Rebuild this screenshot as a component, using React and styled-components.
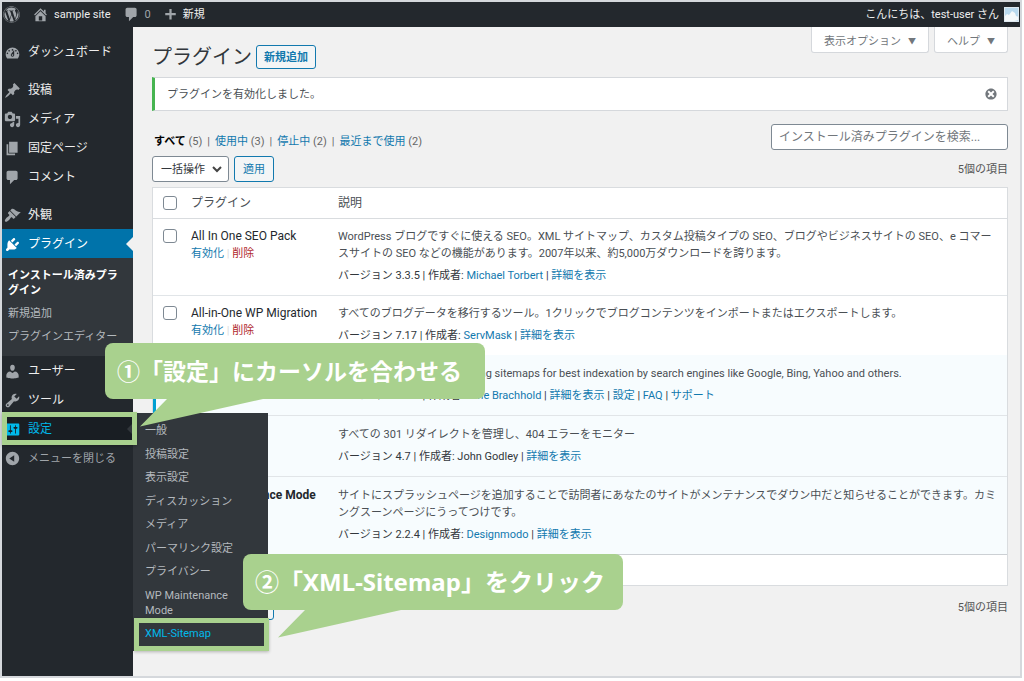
import React from "react";
import styled, { createGlobalStyle } from "styled-components";
import { FaWordpress } from "react-icons/fa";

const GlobalStyle = createGlobalStyle`
  * {
    box-sizing: border-box;
  }
  body {
    margin: 0;
    background: #fff;
    color: #4a4f54;
    font-family: Roboto, "Noto Sans CJK JP", sans-serif;
    font-size: 11px;
    line-height: 17px;
  }
  h1, p, ul {
    margin: 0;
    padding: 0;
  }
  ul {
    list-style: none;
  }
  a {
    color: #1279ae;
    text-decoration: none;
  }
  button, input, select {
    font-family: inherit;
  }
`;

const ICONS = {
  home: "M16 8.5l1.53 1.53-1.06 1.06L10 4.6l-6.47 6.49-1.06-1.06L10 2.5l4 4v-2h2v4zm-6-2.46l6 5.99V18H4v-5.97zM12 17v-5H8v5h4z",
  plus: "M17 8v3h-5.5v5.5h-3V11H3V8h5.500V2.500h3V8z",
  dashboard:
    "M3.76 17h12.48c1.1-1.37 1.76-3.11 1.76-5 0-4.42-3.58-8-8-8s-8 3.58-8 8c0 1.89.66 3.63 1.76 5zM10 6c.55 0 1 .45 1 1s-.45 1-1 1-1-.45-1-1 .45-1 1-1zM6 7c.55 0 1 .45 1 1s-.45 1-1 1-1-.45-1-1 .45-1 1-1zm8 0c.55 0 1 .45 1 1s-.45 1-1 1-1-.45-1-1 .45-1 1-1zm-5.37 4.55L12 7v6c0 1.100-.9 2-2 2s-2-.9-2-2c0-.57.24-1.080.63-1.450zM4 10c.55 0 1 .45 1 1s-.45 1-1 1-1-.45-1-1 .45-1 1-1zm12 0c.55 0 1 .45 1 1s-.45 1-1 1-1-.45-1-1 .45-1 1-1zm-5 3c0-.55-.45-1-1-1s-1 .45-1 1 .45 1 1 1 1-.45 1-1z",
  post: "M10.44 3.02l1.82-1.82 6.36 6.35-1.83 1.82c-1.05-.68-2.48-.57-3.41.36l-.75.75c-.92.93-1.04 2.35-.35 3.41l-1.83 1.82-2.41-2.41-2.8 2.79c-.42.42-3.38 2.71-3.8 2.29s1.86-3.39 2.28-3.81l2.79-2.79L4.1 9.36l1.83-1.82c1.05.69 2.48.57 3.4-.36l.75-.75c.93-.92 1.05-2.35.36-3.41z",
  media:
    "M13 11V4c0-.55-.45-1-1-1h-1.67L9 1H5L3.67 3H2c-.55 0-1 .45-1 1v7c0 .55.45 1 1 1h10c.55 0 1-.45 1-1zM7 4.5c1.38 0 2.5 1.12 2.5 2.5S8.38 9.5 7 9.5 4.5 8.38 4.5 7 5.62 4.5 7 4.5zM14 6h5v10.5c0 1.38-1.12 2.5-2.5 2.5S14 17.88 14 16.5s1.12-2.5 2.5-2.5c.17 0 .34.02.5.05V9h-3V6zm-4 8.05V13h2v3.5c0 1.38-1.12 2.5-2.5 2.5S7 17.88 7 16.5 8.12 14 9.5 14c.17 0 .34.02.5.05z",
  page: "M6 15V2h10v13H6zm-1 1h8v2H3V5h2v11z",
  comments:
    "M5 2h9q.82 0 1.41.59T16 4v7q0 .82-.59 1.41T14 13h-2l-5 5v-5H5q-.82 0-1.41-.59T3 11V4q0-.82.59-1.41T5 2z",
  appearance:
    "M14.48 11.06L7.41 3.99l1.5-1.5c.5-.56 2.3-.47 3.51.32 1.21.8 1.43 1.28 2.91 2.1 1.18.64 2.45 1.26 4.45.85zm-.71.71L6.7 4.7 4.93 6.47c-.39.39-.39 1.02 0 1.41l1.06 1.06c.39.39.39 1.03 0 1.42-.6.6-1.43 1.11-2.21 1.69-.35.26-.7.53-1.01.84C1.43 14.23.4 16.08 1.4 17.07c.99 1 2.84-.03 4.18-1.36.31-.31.58-.66.85-1.02.57-.78 1.08-1.61 1.69-2.21.39-.39 1.02-.39 1.41 0l1.06 1.06c.39.39 1.02.39 1.41 0z",
  plugins:
    "M13.11 4.36L9.87 7.6 8 5.73l3.24-3.24c.35-.34 1.05-.2 1.56.32.52.51.66 1.21.31 1.55zm-8 1.77l.91-1.12 9.01 9.01-1.19.84c-.71.71-2.63 1.16-3.82 1.16H6.14L4.9 17.26c-.59.59-1.54.59-2.12 0-.59-.58-.59-1.53 0-2.12l1.24-1.24v-3.88c0-1.13.4-3.19 1.09-3.89zm7.26 3.97l3.24-3.24c.34-.35 1.04-.21 1.55.31.52.51.66 1.21.31 1.55l-3.24 3.25z",
  users:
    "M10 9.25c-2.27 0-2.73-3.44-2.73-3.44C7 4.02 7.82 2 9.97 2c2.16 0 2.98 2.02 2.71 3.81 0 0-.41 3.44-2.68 3.44zm0 2.57L12.72 10c2.39 0 4.52 2.33 4.52 4.53v2.49s-3.65 1.13-7.24 1.13c-3.65 0-7.24-1.13-7.24-1.13v-2.49c0-2.25 1.94-4.48 4.47-4.48z",
  tools:
    "M16.68 9.77c-1.34 1.34-3.3 1.67-4.95.99l-5.41 6.52c-.99.99-2.59.99-3.58 0s-.99-2.59 0-3.57l6.52-5.42c-.68-1.65-.35-3.61.99-4.95 1.28-1.28 3.12-1.62 4.72-1.06l-2.89 2.89 2.82 2.82 2.86-2.87c.53 1.58.18 3.39-1.08 4.65zM3.81 16.21c.4.39 1.04.39 1.43 0 .4-.4.4-1.04 0-1.43-.39-.4-1.03-.4-1.43 0-.39.39-.39 1.03 0 1.43z",
  settings:
    "M18 16V4c0-.55-.45-1-1-1H3c-.55 0-1 .45-1 1v12c0 .55.45 1 1 1h14c.55 0 1-.45 1-1zM8 11h1c.55 0 1 .45 1 1s-.45 1-1 1H8v1.5c0 .28-.22.5-.5.5s-.5-.22-.5-.5V13H6c-.55 0-1-.45-1-1s.45-1 1-1h1V5.5c0-.28.22-.5.5-.5s.5.22.5.5V11zm5-2h-1c-.55 0-1-.45-1-1s.45-1 1-1h1V5.5c0-.28.22-.5.5-.5s.5.22.5.5V7h1c.55 0 1 .45 1 1s-.45 1-1 1h-1v5.5c0 .28-.22.5-.5.5s-.5-.22-.5-.5V9z",
  collapse:
    "M10 2.16c4.33 0 7.84 3.51 7.84 7.84s-3.51 7.84-7.84 7.84S2.16 14.33 2.16 10 5.71 2.16 10 2.16zm2 11.72V6.12L6.18 9.97z",
  dismiss:
    "M10 2c4.42 0 8 3.58 8 8s-3.58 8-8 8-8-3.58-8-8 3.58-8 8-8zm5 11l-3-3 3-3-2-2-3 3-3-3-2 2 3 3-3 3 2 2 3-3 3 3z",
};

const Icon = ({ name, size = 17 }) => (
  <svg width={size} height={size} viewBox="0 0 20 20" fill="currentColor" aria-hidden="true">
    <path fillRule="evenodd" d={ICONS[name]} />
  </svg>
);

const Frame = styled.div`
  position: relative;
  display: flex;
  flex-direction: column;
  min-height: calc(100vh - 3px);
  margin: 0 2px 3px 0;
  border: 2px solid #d5d8dc;
  background: #f1f1f1;
`;

const AdminBar = styled.header`
  display: flex;
  align-items: center;
  height: 25px;
  padding: 0 1px 0 1px;
  background: #23282d;
  a {
    display: flex;
    align-items: center;
    gap: 5px;
    margin-right: 12px;
    color: #eee;
    svg {
      color: #a0a5aa;
    }
  }
  a:last-child {
    margin: 0 0 0 auto;
  }
`;

const Dim = styled.span`
  color: #a0a5aa;
`;

const Body = styled.div`
  display: flex;
  flex: 1;
`;

const Sidebar = styled.nav`
  flex: none;
  width: 131px;
  padding-top: 10px;
  background: #23282d;
`;

const MenuItem = styled.li`
  position: relative;
  margin-top: ${(p) => (p.$gap ? "9px" : 0)};
`;

const menuColors = {
  normal: { bg: "transparent", text: "#eee", icon: "#a0a5aa" },
  current: { bg: "#0073aa", text: "#fff", icon: "#fff" },
  hover: { bg: "#191e23", text: "#00b9eb", icon: "#00b9eb" },
  muted: { bg: "transparent", text: "#a0a5aa", icon: "#a0a5aa" },
};

const MenuLink = styled.a`
  display: flex;
  align-items: center;
  gap: 7px;
  height: 29px;
  padding: 1px 0 0 2px;
  background: ${(p) => menuColors[p.$tone].bg};
  color: ${(p) => menuColors[p.$tone].text};
  font-size: ${(p) => (p.$tone === "muted" ? 11 : 12)}px;
  svg {
    color: ${(p) => menuColors[p.$tone].icon};
  }
`;

const Notch = styled.span`
  position: absolute;
  top: ${(p) => 15 - p.$size}px;
  right: 0;
  border: ${(p) => p.$size}px solid transparent;
  border-left: 0;
  border-right-color: ${(p) => p.$color};
`;

const SubMenu = styled.ul`
  padding: 6px 0 8px;
  background: #32373c;
  a {
    display: block;
    padding: 4px 10px 4px 6px;
    color: #b4b9be;
    line-height: 15px;
  }
  a[aria-current] {
    color: #fff;
    font-weight: bold;
  }
`;

const Flyout = styled.ul`
  position: absolute;
  z-index: 2;
  top: -1px;
  left: 100%;
  display: flex;
  flex-direction: column;
  justify-content: space-between;
  width: 135px;
  height: 238px;
  padding: 6px 0;
  background: #32373c;
  a {
    display: block;
    padding: 4px 24px 4px 12px;
    color: #b4b9be;
    line-height: 15px;
  }
  a[data-hover] {
    color: #00b9eb;
  }
`;

const Highlight = styled.div`
  position: absolute;
  z-index: 3;
  top: ${(p) => p.$top}px;
  left: ${(p) => p.$left}px;
  width: 135px;
  height: 33px;
  border: 5px solid #a9d18e;
  box-shadow: 0 1px 3px rgba(0, 0, 0, 0.25);
  pointer-events: none;
`;

const Callout = styled.div`
  position: absolute;
  z-index: 4;
  top: ${(p) => p.$top}px;
  left: ${(p) => p.$left}px;
  width: 380px;
  height: 56px;
  padding-left: 12px;
  border-radius: 8px;
  background: #a9d18e;
  color: #fff;
  font: bold ${(p) => p.$size}px/56px "Noto Sans", "Noto Sans CJK JP", sans-serif;
  white-space: nowrap;
  svg {
    position: absolute;
    top: 55px;
    left: 34px;
  }
`;

const Main = styled.main`
  flex: 1;
  min-width: 0;
  padding: 0 12px 20px 19px;
`;

const Heading = styled.div`
  display: flex;
  align-items: flex-start;
  height: 50px;
  h1 {
    margin: 16px 4px 0 0;
    color: #32373c;
    font-size: 20px;
    font-weight: 400;
    line-height: 28px;
  }
`;

const Button = styled.button`
  height: ${(p) => (p.$title ? 24 : 26)}px;
  margin-top: ${(p) => (p.$title ? 18 : 0)}px;
  padding: 0 ${(p) => (p.$title ? 7 : 8)}px;
  border: 1px solid #1279ae;
  border-radius: 3px;
  background: #f3f5f6;
  color: #1279ae;
  font-size: 11px;
  font-weight: ${(p) => (p.$title ? 700 : 400)};
  line-height: 17px;
`;

const ScreenLinks = styled.div`
  display: flex;
  gap: 5px;
  margin-left: auto;
  button {
    height: 26px;
    padding: 0 12px;
    border: 1px solid #d5d8dc;
    border-top: 0;
    border-radius: 0 0 3px 3px;
    background: #fff;
    color: #72777c;
    font-size: 11px;
  }
  span {
    margin-left: 7px;
    font-size: 8px;
    vertical-align: 1px;
  }
`;

const Notice = styled.div`
  display: flex;
  align-items: center;
  justify-content: space-between;
  height: 34px;
  padding: 0 9px 0 12px;
  border: 1px solid #d5d8dc;
  border-left: 3px solid #46b450;
  background: #fff;
  button {
    display: flex;
    padding: 0;
    border: 0;
    background: none;
    color: #72777c;
  }
`;

const FilterRow = styled.div`
  display: flex;
  align-items: center;
  justify-content: space-between;
  margin: 12px 0 6px;
  input {
    width: 237px;
    height: 26px;
    padding: 0 7px;
    border: 1px solid #7e8993;
    border-radius: 3px;
    background: #fff;
    font-size: 12px;
  }
  input::placeholder {
    color: #72777c;
  }
`;

const Filters = styled.ul`
  display: flex;
  padding: 10px 0 0 2px;
  color: #666;
  li + li::before {
    content: "|";
    margin: 0 5px;
  }
  a[aria-current] {
    color: #000;
    font-weight: bold;
  }
`;

const TableNav = styled.div`
  display: flex;
  align-items: center;
  gap: 5px;
  margin: ${(p) => (p.$bottom ? "8px 0 0" : "0 0 5px")};
  color: #555;
  select {
    appearance: none;
    width: 77px;
    height: 26px;
    padding: 0 8px;
    border: 1px solid #7e8993;
    border-radius: 3px;
    background: #fff;
    color: #32373c;
    font-size: 11px;
  }
  > span:last-child {
    margin-left: auto;
  }
`;

const SelectBox = styled.span`
  position: relative;
  display: flex;
  svg {
    position: absolute;
    top: 10px;
    right: 7px;
    pointer-events: none;
  }
`;

const Table = styled.table`
  width: 100%;
  border: 1px solid #d9dcdf;
  border-spacing: 0;
  background: #fff;
  table-layout: fixed;
  th, td {
    padding: 9px 8px 11px;
    text-align: left;
    vertical-align: top;
  }
  th {
    height: 31px;
    padding: 0 8px;
    font-size: 12px;
    font-weight: 400;
    vertical-align: middle;
  }
  thead th {
    border-bottom: 1px solid #d9dcdf;
  }
  tfoot th {
    border-top: 1px solid #ccd0d4;
  }
  th:first-child {
    width: 30px;
    padding: 0 0 0 10px;
  }
  th:nth-child(2) {
    width: 147px;
  }
  input {
    appearance: none;
    display: block;
    width: 14px;
    height: 14px;
    margin: 1px 0 0;
    border: 1px solid #7e8993;
    border-radius: 3px;
    background: #fff;
  }
  th input {
    margin: 0;
  }
`;

const Row = styled.tr`
  background: ${(p) => (p.$active ? "#f7fcfe" : "#fff")};
  td {
    padding-top: ${(p) => (p.$active ? 10 : 9)}px;
  }
  & + & td {
    border-top: 1px solid #e1e5e8;
  }
  td:first-child {
    padding-left: ${(p) => (p.$active ? 7 : 10)}px;
    padding-right: 0;
    border-left: ${(p) => (p.$active ? "3px solid #00a0d2" : 0)};
  }
`;

const Name = styled.p`
  color: #23282d;
  font-size: 12px;
  font-weight: ${(p) => (p.$active ? 700 : 400)};
  white-space: nowrap;
`;

const Actions = styled.p`
  color: #ddd;
  a:last-child {
    color: #b0272b;
  }
`;

const Meta = styled.p`
  margin-top: 5px;
  color: #32373c;
`;

const menu = [
  { label: "ダッシュボード", icon: "dashboard" },
  { label: "投稿", icon: "post", gap: true },
  { label: "メディア", icon: "media" },
  { label: "固定ページ", icon: "page" },
  { label: "コメント", icon: "comments" },
  { label: "外観", icon: "appearance", gap: true },
  {
    label: "プラグイン",
    icon: "plugins",
    tone: "current",
    sub: ["インストール済みプラグイン", "新規追加", "プラグインエディター"],
  },
  { label: "ユーザー", icon: "users" },
  { label: "ツール", icon: "tools" },
  {
    label: "設定",
    icon: "settings",
    tone: "hover",
    flyout: [
      "一般",
      "投稿設定",
      "表示設定",
      "ディスカッション",
      "メディア",
      "パーマリンク設定",
      "プライバシー",
      "WP Maintenance Mode",
      "XML-Sitemap",
    ],
  },
  { label: "メニューを閉じる", icon: "collapse", tone: "muted" },
];

const filters = [
  ["すべて", 5],
  ["使用中", 3],
  ["停止中", 2],
  ["最近まで使用", 2],
];

const plugins = [
  {
    name: "All In One SEO Pack",
    desc: "WordPress ブログですぐに使える SEO。XML サイトマップ、カスタム投稿タイプの SEO、ブログやビジネスサイトの SEO、e コマースサイトの SEO などの機能があります。2007年以来、約5,000万ダウンロードを誇ります。",
    version: "3.3.5",
    author: <a href="#author">Michael Torbert</a>,
    links: ["詳細を表示"],
  },
  {
    name: "All-in-One WP Migration",
    desc: "すべてのブログデータを移行するツール。1クリックでブログコンテンツをインポートまたはエクスポートします。",
    version: "7.17",
    author: <a href="#author">ServMask</a>,
    links: ["詳細を表示"],
  },
  {
    name: "Google XML Sitemaps",
    active: true,
    desc: "This plugin improves SEO using sitemaps for best indexation by search engines like Google, Bing, Yahoo and others.",
    version: "4.1.0",
    author: <a href="#author">Arne Brachhold</a>,
    links: ["詳細を表示", "設定", "FAQ", "サポート"],
  },
  {
    name: "Redirection",
    active: true,
    desc: "すべての 301 リダイレクトを管理し、404 エラーをモニター",
    version: "4.7",
    author: "John Godley",
    links: ["詳細を表示"],
  },
  {
    name: "WP Maintenance Mode",
    active: true,
    desc: "サイトにスプラッシュページを追加することで訪問者にあなたのサイトがメンテナンスでダウン中だと知らせることができます。カミングスーンページにうってつけです。",
    version: "2.2.4",
    author: <a href="#author">Designmodo</a>,
    links: ["詳細を表示"],
  },
];

const BulkActions = ({ bottom }) => (
  <TableNav $bottom={bottom}>
    <SelectBox>
      <select aria-label="一括操作を選択">
        <option>一括操作</option>
      </select>
      <svg width="10" height="7" viewBox="0 0 10 7" fill="none" stroke="#444" strokeWidth="2">
        <path d="M1 1l4 4 4-4" />
      </svg>
    </SelectBox>
    <Button>適用</Button>
    <span>5個の項目</span>
  </TableNav>
);

const HeadRow = ({ blank }) => (
  <tr>
    <th>{!blank && <input type="checkbox" aria-label="すべて選択" />}</th>
    <th>{!blank && "プラグイン"}</th>
    <th>{!blank && "説明"}</th>
  </tr>
);

const Tail = () => (
  <svg width="124" height="29" viewBox="0 0 124 29" fill="#a9d18e" aria-hidden="true">
    <path d="M28 0h96v1L1 28.500 28 1z" />
  </svg>
);

const App = () => {
  return (
    <>
      <GlobalStyle />
      <Frame>
        <AdminBar>
          <a href="#wp" aria-label="WordPress">
            <FaWordpress size={17} />
          </a>
          <a href="#site">
            <Icon name="home" />
            sample site
          </a>
          <a href="#comments">
            <Icon name="comments" />
            <Dim>0</Dim>
          </a>
          <a href="#new">
            <Icon name="plus" size={15} />
            新規
          </a>
          <a href="#user">
            こんにちは、test-user さん
            <svg width="15" height="15" viewBox="0 0 15 15" aria-hidden="true">
              <path fill="#b9d9ee" d="M0 0h15v15H0z" />
              <path fill="#f4f8fa" d="M0 10l3-3 2 1 3-4 3 2 1 3 3 1v3l-5 1H0z" />
              <path fill="none" stroke="#dfe9f0" d="M.5.5h14v14H.5z" />
            </svg>
          </a>
        </AdminBar>

        <Body>
          <Sidebar>
            <ul>
              {menu.map(({ label, icon, gap, tone = "normal", sub, flyout }) => (
                <MenuItem key={label} $gap={gap}>
                  <MenuLink href="#menu" $tone={tone}>
                    <Icon name={icon} />
                    {label}
                  </MenuLink>
                  {sub && (
                    <>
                      <Notch $size={7} $color="#f1f1f1" />
                      <SubMenu>
                        {sub.map((text, i) => (
                          <li key={text}>
                            <a href="#sub" aria-current={i === 0 ? "page" : undefined}>
                              {text}
                            </a>
                          </li>
                        ))}
                      </SubMenu>
                    </>
                  )}
                  {flyout && (
                    <>
                      <Notch $size={6} $color="#32373c" />
                      <Flyout>
                        {flyout.map((text) => (
                          <li key={text}>
                            <a href="#sub" data-hover={text === "XML-Sitemap" || undefined}>
                              {text}
                            </a>
                          </li>
                        ))}
                      </Flyout>
                    </>
                  )}
                </MenuItem>
              ))}
            </ul>
          </Sidebar>

          <Main>
            <Heading>
              <h1>プラグイン</h1>
              <Button $title>新規追加</Button>
              <ScreenLinks>
                <button>
                  表示オプション<span>▼</span>
                </button>
                <button>
                  ヘルプ<span>▼</span>
                </button>
              </ScreenLinks>
            </Heading>

            <Notice>
              <p>プラグインを有効化しました。</p>
              <button aria-label="この通知を非表示にする">
                <Icon name="dismiss" size={14} />
              </button>
            </Notice>

            <FilterRow>
              <Filters>
                {filters.map(([label, count], i) => (
                  <li key={label}>
                    <a href="#filter" aria-current={i === 0 ? "page" : undefined}>
                      {label}
                    </a>{" "}
                    ({count})
                  </li>
                ))}
              </Filters>
              <input
                type="search"
                aria-label="プラグインを検索"
                placeholder="インストール済みプラグインを検索..."
              />
            </FilterRow>

            <BulkActions />

            <Table>
              <thead>
                <HeadRow />
              </thead>
              <tbody>
                {plugins.map(({ name, active, desc, version, author, links }) => (
                  <Row key={name} $active={active}>
                    <td>
                      <input type="checkbox" aria-label={`${name} を選択`} />
                    </td>
                    <td>
                      <Name $active={active}>{name}</Name>
                      {!active && (
                        <Actions>
                          <a href="#activate">有効化</a> | <a href="#delete">削除</a>
                        </Actions>
                      )}
                    </td>
                    <td>
                      <p>{desc}</p>
                      <Meta>
                        バージョン {version} | 作成者: {author}
                        {links.map((text) => (
                          <React.Fragment key={text}>
                            {" | "}
                            <a href="#detail">{text}</a>
                          </React.Fragment>
                        ))}
                      </Meta>
                    </td>
                  </Row>
                ))}
              </tbody>
              <tfoot>
                <HeadRow blank />
              </tfoot>
            </Table>

            <BulkActions bottom />
          </Main>
        </Body>

        {/* tutorial annotations drawn over the screen */}
        <Highlight $top={410} $left={0} />
        <Highlight $top={616} $left={132} />
        <Callout $top={341} $left={103} $size={23}>
          ①「設定」にカーソルを合わせる
          <Tail />
        </Callout>
        <Callout $top={552} $left={241} $size={24}>
          ②「XML-Sitemap」をクリック
          <Tail />
        </Callout>
      </Frame>
    </>
  );
};

export default App;
